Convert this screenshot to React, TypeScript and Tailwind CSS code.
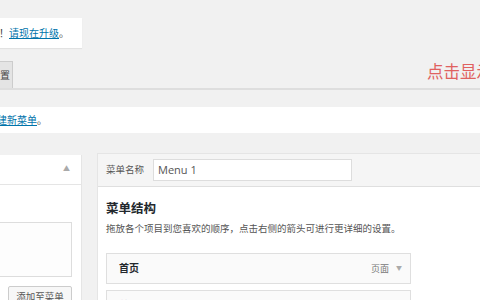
// WP nav-menus screen, cropped corner
const cjk = { fontFamily: '"Open Sans", "Noto Sans CJK SC", sans-serif' };

function MenuItem({ title, kind }: { title: string; kind: string }) {
  return (
    <div className="flex h-[31px] w-[305px] items-center justify-between border border-[#dfdfdf] bg-[#fafafa] pl-[12px] pr-[8px]">
      <span className="text-[10px] font-bold text-[#23282d]">{title}</span>
      <span className="flex items-center gap-[7px] text-[9px] text-[#777]">
        {kind}
        <span className="text-[6px] text-[#aaa]">▼</span>
      </span>
    </div>
  );
}

export default function App() {
  return (
    <div className="flex h-[300px] w-[480px] flex-col overflow-hidden bg-[#f1f1f1]" style={cjk}>
      <div className="h-[18px] shrink-0" />
      <div className="flex h-[30px] w-[82px] shrink-0 items-center bg-white text-[10px] text-[#444] shadow-[0_1px_1px_rgba(0,0,0,0.06)]">
        <span className="ml-[-1px]">！</span>
        <a className="text-[#0073aa] underline">请现在升级</a>
        <span>。</span>
      </div>
      <div className="h-[13px] shrink-0" />
      <div className="flex h-[27px] shrink-0 items-stretch">
        <div className="flex w-[13px] items-center justify-end overflow-hidden border-r border-t border-[#ccc] bg-[#e4e4e4] text-[10px] text-[#444]">
          <span className="whitespace-nowrap pr-[2px]">设置</span>
        </div>
        <div className="ml-auto flex items-start overflow-hidden pt-[1px]">
          <span className="w-[53px] whitespace-nowrap text-[16.5px] leading-[20px] text-[#e0615f]">点击显示屏幕选项</span>
        </div>
      </div>
      <div className="h-[2px] shrink-0 bg-[#dedede]" />
      <div className="h-[17px] shrink-0" />
      <div className="flex h-[26px] shrink-0 items-center overflow-hidden bg-white text-[10px] text-[#444]">
        <a className="ml-[-3px] text-[#0073aa] underline">建新菜单</a>
        <span>。</span>
      </div>
      <div className="h-[20px] shrink-0" />
      <div className="flex flex-1 items-start gap-[15px]">
        <div className="mt-[2px] w-[82px] shrink-0 border-r border-[#e5e5e5] bg-white pb-[20px]">
          <div className="flex h-[30px] items-center justify-end border-b border-[#e5e5e5] pr-[11px] text-[7px] text-[#aaa]">▲</div>
          <div className="mt-[37px] h-[55px] w-[72px] border border-l-0 border-[#dddddd] bg-[#fdfdfd]" />
          <div className="ml-[8px] mt-[9px] flex h-[22px] w-[64px] items-center justify-center rounded-[2px] border border-[#cccccc] bg-[#f7f7f7] text-[9.5px] text-[#555]">
            添加至菜单
          </div>
        </div>
        <div className="flex-1 border-l border-t border-[#e5e5e5] bg-white">
          <div className="flex h-[33px] items-center border-b border-[#dfdfdf] bg-[#f5f5f5] pl-[8px]">
            <span className="text-[9.5px] text-[#555]">菜单名称</span>
            <div className="ml-[9px] flex h-[22px] w-[199px] items-center border border-[#dddddd] bg-white pl-[4px] text-[11px] text-[#555]">
              Menu 1
            </div>
          </div>
          <div className="pl-[8px]">
            <div className="mt-[14px] text-[12.5px] font-bold leading-[16px] text-[#23282d]">菜单结构</div>
            <div className="mt-[5px] text-[9.5px] leading-[14px] text-[#555]">
              拖放各个项目到您喜欢的顺序，点击右侧的箭头可进行更详细的设置。
            </div>
            <div className="mt-[17px] flex flex-col gap-[6px]">
              <MenuItem title="首页" kind="页面" />
              <MenuItem title="关于" kind="页面" />
            </div>
          </div>
        </div>
      </div>
    </div>
  );
}
